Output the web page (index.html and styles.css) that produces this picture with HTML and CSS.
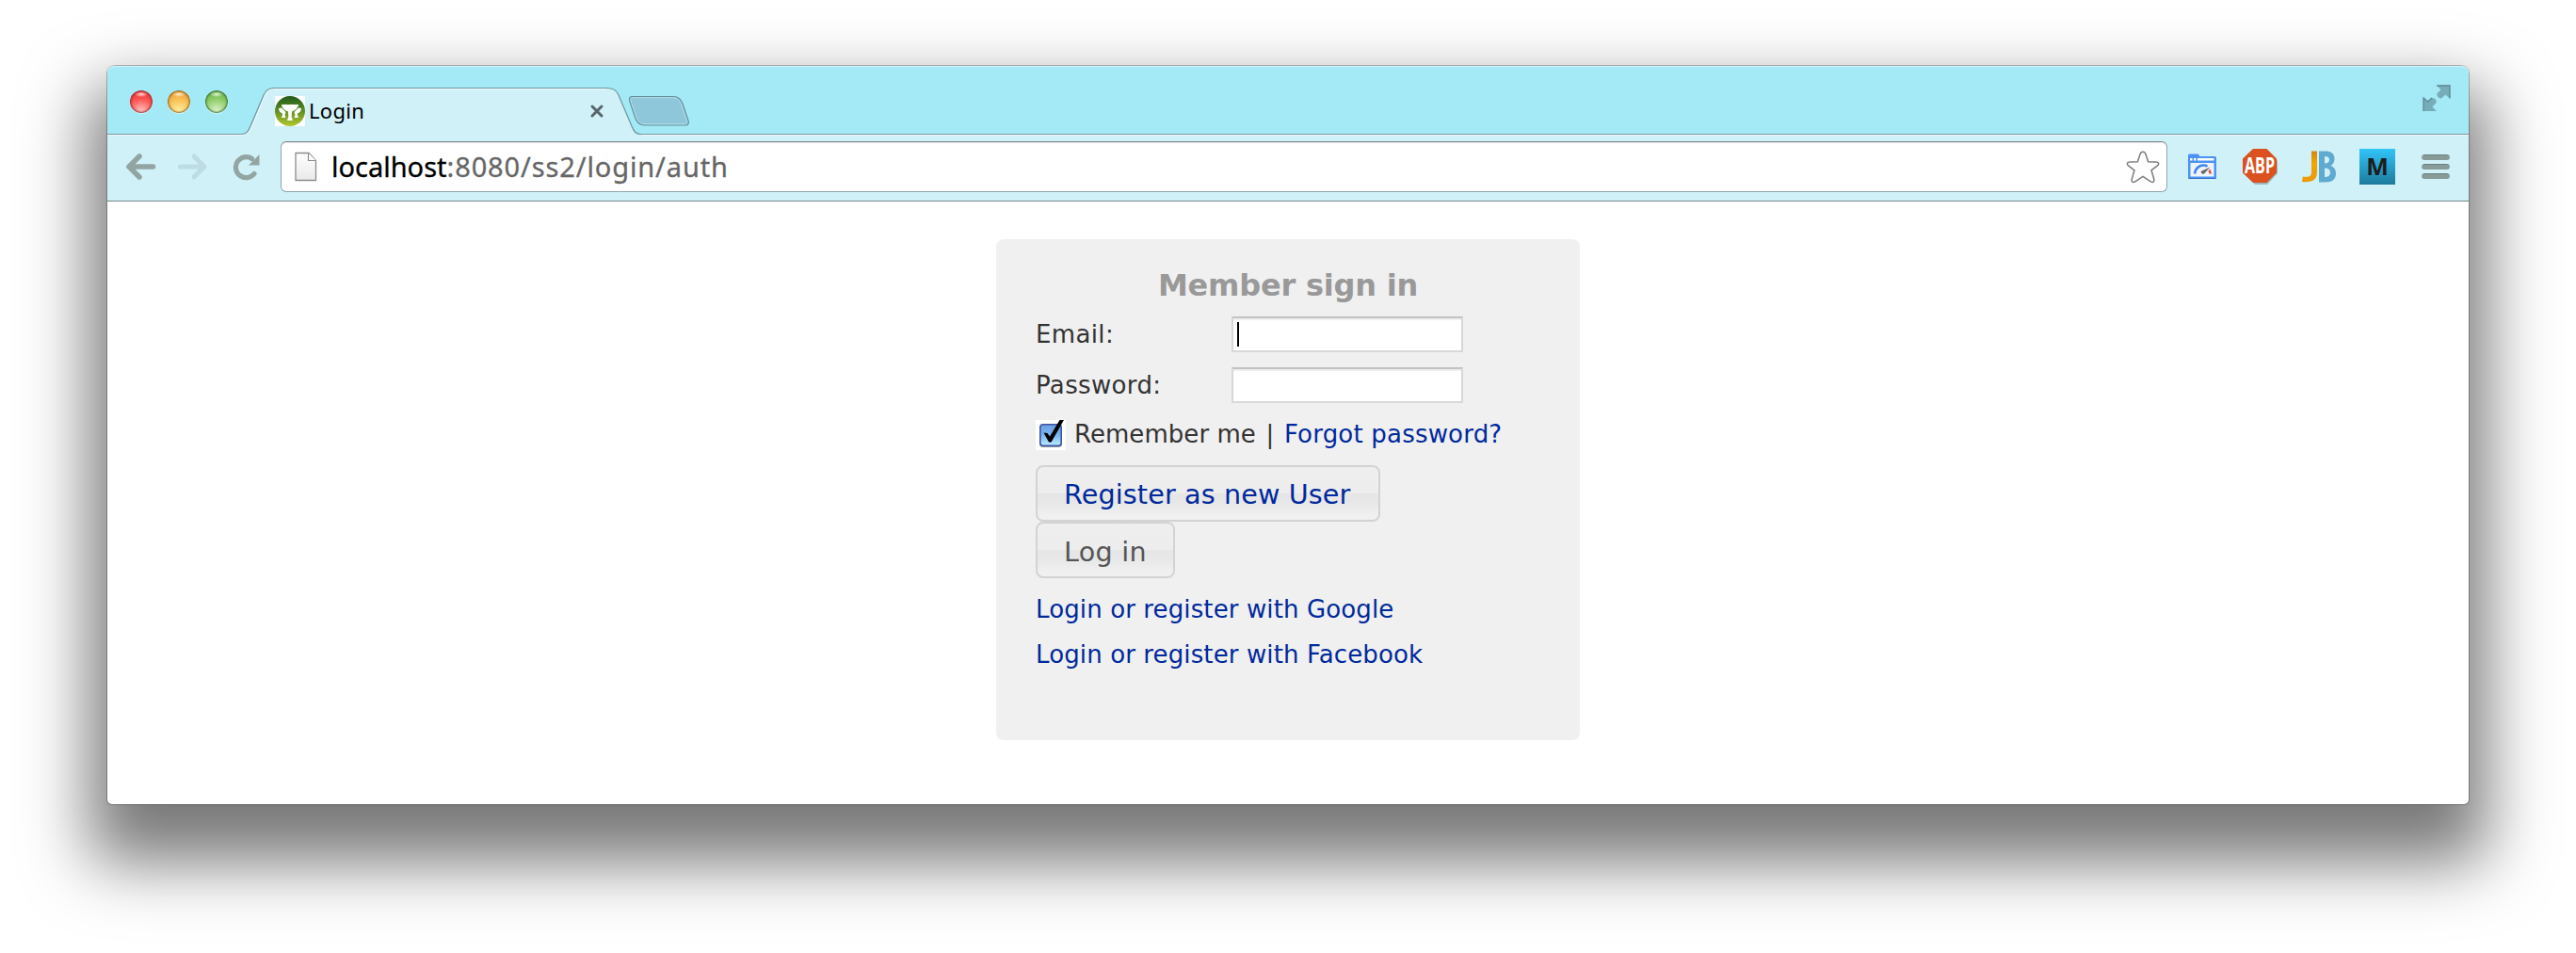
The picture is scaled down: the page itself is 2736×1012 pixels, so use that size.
FILE: index.html
```html
<!DOCTYPE html>
<html lang="en">
<head>
<meta charset="utf-8">
<title>Login</title>
<link rel="stylesheet" href="styles.css">
</head>
<body>
<div class="window">
  <header class="tabstrip">
    <div class="lights">
      <span class="light light-red"></span>
      <span class="light light-amber"></span>
      <span class="light light-green"></span>
    </div>
    <div class="tab">
      <svg class="tab-shape" width="424" height="52" viewBox="0 0 424 52">
        <path d="M-2 49.500C4 49.500 6 46 8 41L22 8C24 3 27 .5 33 .5H387C393 .5 397 3 399 8L413 41C415 46 417 49.500 422 49.500L424 49.500V52H-2Z" fill="#d0f1f8"/>
        <path d="M-2 50.500C5 50.500 8 46 10 41L23 9C25 4 28 1.500 34 1.500H386" fill="none" stroke="#ecfbfe"/>
        <path d="M-2 49.500C4 49.500 6 46 8 41L22 8C24 3 27 .5 33 .5H387C393 .5 397 3 399 8L413 41C415 46 417 49.500 422 49.500H424" fill="none" stroke="#6f959d" stroke-width="1.200"/>
      </svg>
      <svg class="favicon" width="32" height="32" viewBox="0 0 32 32">
        <defs><linearGradient id="leaf" x1="0" y1="0" x2="0" y2="1"><stop offset="0" stop-color="#215a1c"/><stop offset=".5" stop-color="#5f8f22"/><stop offset="1" stop-color="#b3c82e"/></linearGradient></defs>
        <path d="M0 0H32V32H0Z" fill="#fff"/>
        <circle cx="16" cy="16" r="16" fill="url(#leaf)"/>
        <path d="M7 9H25C24.500 13 21 15.500 18 16.500L17.700 22L19 26H13L14.300 22L14 16.500C11 15.500 7.500 13 7 9ZM4 13L7 12.500L11.500 17L11 19L10.500 20L11.500 23H7L8 20V18.500C6 18 4 16 4 13ZM28 13L25 12.500L20.500 17L21 19L21.500 20L20.500 23H25L24 20V18.500C26 18 28 16 28 13Z" fill="#fff"/>
      </svg>
      <span class="tab-title">Login</span>
      <svg class="tab-close" width="16" height="16" viewBox="0 0 16 16"><path d="M3 3L13 13M13 3L3 13" stroke="#586569" stroke-width="3" stroke-linecap="round"/></svg>
    </div>
    <svg class="newtab" width="66" height="34" viewBox="0 0 66 34">
      <path d="M4 1.500H48C54 1.500 56 5 58 9L64 27C65 30 64 32 61 32H18C12 32 10 29 8 25L2 7C1 4 1 2 4 1.500Z" fill="#8ec7da" stroke="#648f9b" stroke-width="1.200"/>
      <path d="M5 2.800H48C53 2.800 55 6 56.500 9.500L62.500 27C63.500 29.500 63 30.700 60.500 30.700H18.500C13 30.700 11 28 9.500 25L3.300 7C2.500 4.500 2.500 3.300 5 2.800Z" fill="none" stroke="#b3deeb"/>
    </svg>
    <svg class="fullscreen" width="28" height="29" viewBox="0 0 28 29">
      <path d="M14 .8H28V14.800L23.500 10.500L18.800 14.500C15.500 14 14 12.500 14.300 9.300L18.500 5.200Z" fill="#77adb9"/>
      <path d="M0 13.800L4.500 18L9 14C12.500 14.500 14 16 13.700 19L9.500 23.500L14 28H0Z" fill="#77adb9"/>
      <path d="M14 .8H28V14.500M0 28V13.800L4.500 18L9 14" fill="none" stroke="#57838d" stroke-width="1.200"/>
    </svg>
  </header>

  <nav class="toolbar">
    <svg class="back" width="31" height="28" viewBox="0 0 31 28"><path d="M14 3L3 14L14 25M4 14H28.500" fill="none" stroke="#93a5a3" stroke-width="5.600" stroke-linecap="round" stroke-linejoin="round"/></svg>
    <svg class="forward" width="31" height="28" viewBox="0 0 31 28"><path d="M17 3L28 14L17 25M27 14H2.500" fill="none" stroke="#bddde3" stroke-width="5" stroke-linecap="round" stroke-linejoin="round"/></svg>
    <svg class="reload" width="28" height="28" viewBox="0 0 28 28"><path d="M19.500 5.500A11 11 0 1 0 22 21.500" fill="none" stroke="#93a5a3" stroke-width="5.200" stroke-linecap="round"/><path d="M27.500 1V12.500H16Z" fill="#93a5a3"/></svg>
    <div class="omnibox">
      <svg width="24" height="32" viewBox="0 0 24 32">
        <defs><linearGradient id="page" x1="0" y1="0" x2="0" y2="1"><stop offset="0" stop-color="#fff"/><stop offset="1" stop-color="#e9e9ea"/></linearGradient></defs>
        <path d="M1 1.500H15L22.500 9.500V30.500H1Z" fill="url(#page)" stroke="#8c8c8c" stroke-width="1.300"/><path d="M14.500 1.500V9.500H22.500" fill="#fff" stroke="#8c8c8c" stroke-width="1.200"/>
      </svg>
      <span class="host">localhost</span><span class="path">:8080/ss2/login/auth</span>
      <svg class="star" width="36" height="35" viewBox="0 0 36 35"><path d="M18 1.200C19.500 1.200 20.500 2.200 21 3.800L23.600 11.800L32 12C34.800 12 35.500 14.200 33.500 15.800L27 20.800L29.700 30C30.400 33 28.500 34.300 26.300 32.800L18 27.300L9.700 32.800C7.500 34.300 5.600 33 6.300 30L9 20.800L2.500 15.800C.5 14.200 1.200 12 4 12L12.400 11.800L15 3.800C15.500 2.200 16.500 1.200 18 1.200Z" fill="#fff" stroke="#7d7d7d" stroke-width="1.500"/></svg>
    </div>
    <svg class="ext-speed" width="30" height="28" viewBox="0 0 30 28">
      <path d="M0 2Q0 .5 1.500 .5H10Q11.500 .5 11.800 2L12.200 3H28.500Q30 3 30 4.500V25.500Q30 27 28.500 27H1.500Q0 27 0 25.500Z" fill="#4c93f4"/>
      <path d="M2.500 10H27.500V24.500H2.500Z" fill="#edf4fb"/><path d="M2 5H4.500V7.500H2ZM6 5H8.500V7.500H6ZM10 5H27.500V7.500H10Z" fill="#fff"/>
      <path d="M7 21.500C8 14 15 10.800 20.500 13.500" fill="none" stroke="#4285e8" stroke-width="2.700"/><path d="M13.500 19L23.500 14.500L17 21.500Q14 22.500 13.500 19Z" fill="#666"/><path d="M21.500 18.500L23.500 16.500L25 21.500H22.500Z" fill="#e64a3c"/><path d="M.5 26.500H29.500" stroke="#376cc5"/>
    </svg>
    <div class="ext-abp">
      <svg width="38" height="38" viewBox="0 0 38 38">
        <path d="M12 2H26L37 13V26L26 38H13L2 27Z" fill="#9cb8bf"/><path d="M11 0H25.500L36 10.500V25.500L25.500 36H11L0 25.500V10.500Z" fill="#db5120"/>
        <text class="abp" x="2" y="26" textLength="32" lengthAdjust="spacingAndGlyphs">ABP</text>
      </svg>
    </div>
    <svg class="ext-jb" width="36" height="34" viewBox="0 0 36 34">
      <defs><linearGradient id="jay" x1="0" y1="0" x2="0" y2="1"><stop offset="0" stop-color="#d18712"/><stop offset=".4" stop-color="#f3a500"/><stop offset="1" stop-color="#eb990c"/></linearGradient></defs>
      <path d="M10 .5H16V23C16 31 11 34 0 33L.8 27.500C7 28.500 10 27.500 10 23Z" fill="url(#jay)"/>
      <path fill-rule="evenodd" d="M18 .5H24C31 .5 34.500 3 34.500 8.500C34.500 12 33 14.500 30.500 16C34 17.500 36 20 36 24C36 30.500 32 33.500 25 33.500H18ZM24 6V13.500C27.500 13.500 29 12.300 29 9.500C29 7 27.500 6 24 6ZM24 18.500V28C28 28 30 26.500 30 23C30 20 28 18.500 24 18.500Z" fill="#5faace"/>
    </svg>
    <div class="ext-m"><span>M</span></div>
    <svg class="menu" width="30" height="28" viewBox="0 0 30 28"><path d="M3 4H27M3 14H27M3 24H27" stroke="#879b98" stroke-width="5.800" stroke-linecap="round"/><path d="M3 1.500H27M3 11.500H27M3 21.500H27" stroke="#6d7f7e" stroke-linecap="round"/></svg>
  </nav>

  <main class="page">
    <form class="login">
      <h1 class="heading">Member sign in</h1>
      <div class="field"><label class="label" for="email">Email:</label><div class="input" id="email"><i class="caret"></i></div></div>
      <div class="field"><label class="label" for="password">Password:</label><div class="input" id="password"></div></div>
      <div class="remember">
        <svg width="32" height="32" viewBox="0 0 32 32">
          <defs><linearGradient id="aqua" x1="0" y1="0" x2="0" y2="1"><stop offset="0" stop-color="#6b9fe0"/><stop offset=".5" stop-color="#79b5f0"/><stop offset="1" stop-color="#bdebff"/></linearGradient></defs>
          <path d="M0 0H32V32H0Z" fill="#fff"/><rect x="4" y="6" width="24" height="23" rx="4" fill="#8b929b"/><rect x="4.800" y="4.800" width="22.400" height="22.400" rx="3" fill="url(#aqua)" stroke="#3d57a5" stroke-width="1.600"/>
          <path d="M8.500 13.500L12.500 14L15 17.500L25.500 0H30L16.500 23.500H14Z" fill="#000"/>
        </svg>
        <span class="remember-text">Remember me</span><span class="pipe">|</span><a class="link">Forgot password?</a>
      </div>
      <a class="button register">Register as new User</a>
      <button class="button submit" type="button">Log in</button>
      <a class="link provider">Login or register with Google</a>
      <a class="link provider">Login or register with Facebook</a>
    </form>
  </main>
</div>
</body>
</html>
```
FILE: styles.css
```css
* { box-sizing: border-box; }
body { margin: 0; padding: 70px 114px 0; background: #fff; font-family: "DejaVu Sans", sans-serif; overflow: hidden; height: 1012px; }
svg { display: block; flex: none; overflow: visible; }

.window {
  width: 2508px; height: 784px; border-radius: 8px 8px 5px 5px; background: #fff;
  display: flex; flex-direction: column;
  box-shadow: 0 0 0 1px rgba(0, 0, 0, .26), 0 43px 70px 19px rgba(0, 0, 0, .53);
}

.tabstrip {
  height: 73px; flex: none; display: flex; align-items: flex-start;
  background: #a3eaf6; border-bottom: 1px solid #86979b; border-radius: 8px 8px 0 0;
  box-shadow: inset 0 1px #cdf5fb;
}
.lights { display: flex; gap: 16px; padding: 26px 0 0 24px; width: 144px; flex: none; }
.light { width: 24px; height: 24px; border-radius: 50%; flex: none; }
.light-red { background: radial-gradient(ellipse 7px 3px at 50% 17%, #ffdcd9, transparent), radial-gradient(circle at 50% 95%, #ffc7c4 0, #fb5350 55%, #e42b2e 100%); box-shadow: inset 0 0 2px 1px #92262b, 0 1px 1px #c9f6fc; }
.light-amber { background: radial-gradient(ellipse 7px 3px at 50% 17%, #fff1d1, transparent), radial-gradient(circle at 50% 95%, #fff2a5 0, #f7bd51 55%, #e08f27 100%); box-shadow: inset 0 0 2px 1px #8f5b1a, 0 1px 1px #c9f6fc; }
.light-green { background: radial-gradient(ellipse 7px 3px at 50% 17%, #e6f8d9, transparent), radial-gradient(circle at 50% 95%, #e2f6cc 0, #8ccc68 55%, #5ca53f 100%); box-shadow: inset 0 0 2px 1px #38692c, 0 1px 1px #c9f6fc; }

.tab { position: relative; width: 424px; height: 50px; margin-top: 23px; flex: none; display: flex; align-items: center; padding: 0 40px 0 34px; }
.tab-shape { position: absolute; left: 0; top: 0; }
.favicon { position: relative; }
.tab-title { position: relative; flex: 1; font: 22px/32px "Noto Sans", sans-serif; letter-spacing: .3px; color: #000; padding: 0 0 2px 4px; }
.tab-close { position: relative; }
.newtab { margin: 31px 0 0 -15px; }
.fullscreen { margin: 20px 20px 0 auto; }

.toolbar { height: 71px; flex: none; display: flex; align-items: center; padding: 0 20px 2px; background: #d0f1f8; border-bottom: 1px solid #77878a; box-shadow: inset 0 1px #e9fafd; }
.forward { margin-left: 24px; }
.reload { margin-left: 28px; }
.omnibox { width: 2004px; height: 54px; flex: none; margin-left: 22px; display: flex; align-items: center; background: #fff; border: 1px solid #8fa7ac; border-top-color: #75898d; border-radius: 6px; padding: 0 7px 0 14px; box-shadow: inset 0 1px 1px #e4e4e4; }
.host, .path { font: 29px/40px "Noto Sans", sans-serif; -webkit-text-stroke: .3px currentColor; }
.host { color: #000; margin-left: 15px; }
.path { color: #666; letter-spacing: .88px; }
.star { margin-left: auto; }
.ext-speed { margin-left: 22px; }
.ext-abp { margin-left: 28px; flex: none; }
.abp { font: bold 23px "Open Sans", sans-serif; fill: #fff; }
.ext-jb { margin-left: 25px; }
.ext-m { width: 38px; height: 38px; flex: none; margin-left: 25px; background: linear-gradient(#32c4f9, #1d7b9c); color: #1d1d1d; font: bold 25px/36px "Open Sans", sans-serif; text-align: center; }
.menu { margin-left: 28px; }

.page { flex: 1; padding-top: 40px; }
.login { width: 620px; height: 532px; margin: 0 auto; padding: 29px 42px 0; background: #f0f0f0; border-radius: 8px; display: flex; flex-direction: column; align-items: flex-start; font-size: 26px; line-height: 32px; letter-spacing: .12px; color: #333; }
.heading { margin: 0 0 13px; align-self: stretch; text-align: center; font-size: 32px; line-height: 40px; letter-spacing: -.2px; color: #999; }
.field { display: flex; align-items: center; height: 38px; margin-bottom: 16px; }
.label { width: 208px; letter-spacing: .35px; }
.input { width: 246px; height: 38px; background: #fff; border: 2px solid #d8d8d8; border-top-color: #c2c2c2; box-shadow: inset 0 2px 1px #eee; padding: 4px; }
.caret { display: block; width: 2px; height: 26px; background: #000; }
.remember { display: flex; align-items: center; height: 32px; margin: 2px 0 16px; white-space: nowrap; line-height: 30px; }
.remember > span, .remember > a { margin-top: -2px; }
.remember > .remember-text { margin-left: 9px; letter-spacing: .05px; }
.pipe { width: 30px; text-align: center; }
.link { color: #00299c; text-decoration: none; }
.remember .link { letter-spacing: .2px; }
.button { height: 60px; border: 2px solid #d3d3d3; border-radius: 8px; padding: 3px 0 0 28px; margin: 0; text-align: left; font: 28.6px/52px "DejaVu Sans", sans-serif; background: linear-gradient(#efefef 0, #ededed 50%, #e6e6e6 50%, #e7e7e7 65%, #f0f0f0 92%); white-space: nowrap; }
.register { width: 366px; color: #00299c; letter-spacing: .14px; }
.submit { width: 148px; color: #555; letter-spacing: .3px; margin-bottom: 17px; }
.provider { margin-bottom: 16px; }
```
